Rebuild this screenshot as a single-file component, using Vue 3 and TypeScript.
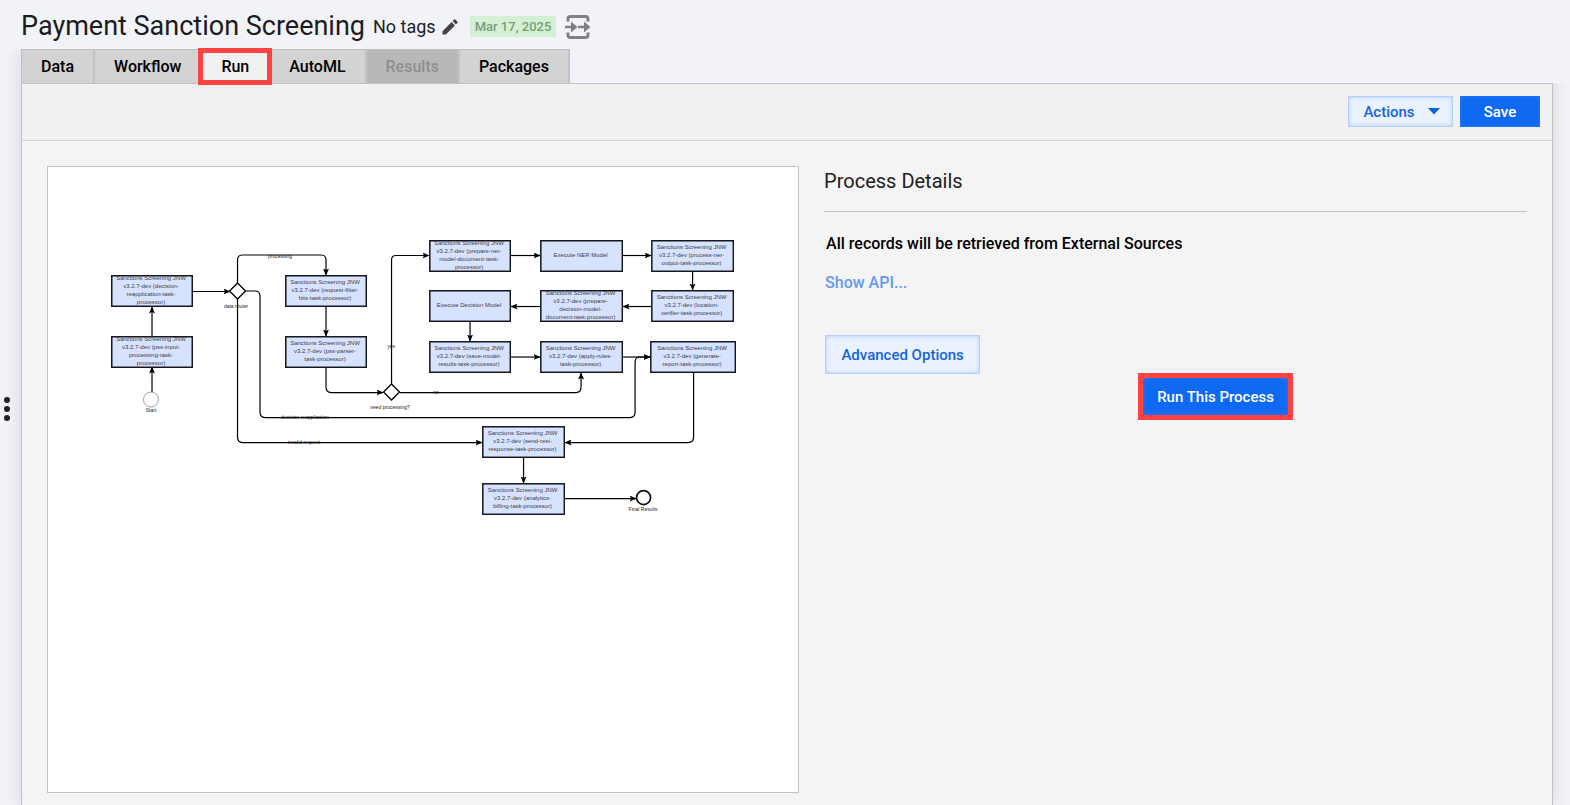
<script setup lang="ts">
import { ref } from 'vue'

interface Tab { name: string; disabled?: boolean }
interface TaskNode { x: number; y: number; w?: number; lines: string[] }
interface EdgeLabel { x: number; y: number; text: string }

const tabs: Tab[] = [
  { name: 'Data' },
  { name: 'Workflow' },
  { name: 'Run' },
  { name: 'AutoML' },
  { name: 'Results', disabled: true },
  { name: 'Packages' },
]
const current = ref('Run')

const product = 'Sanctions Screening JNW'
const nodes: TaskNode[] = [
  { x: 111, y: 275, lines: [product, 'v3.2.7-dev (decision-', 'reapplication-task-', 'processor)'] },
  { x: 111, y: 336, lines: [product, 'v3.2.7-dev (pss-input-', 'processing-task-', 'processor)'] },
  { x: 285, y: 275, lines: [product, 'v3.2.7-dev (request-filter-', 'hits-task-processor)'] },
  { x: 285, y: 336, lines: [product, 'v3.2.7-dev (pss-parser-', 'task-processor)'] },
  { x: 429, y: 240, lines: [product, 'v3.2.7-dev (prepare-ner-', 'model-document-task-', 'processor)'] },
  { x: 540, y: 240, w: 83, lines: ['Execute NER Model'] },
  { x: 651, y: 240, w: 83, lines: [product, 'v3.2.7-dev (process-ner-', 'output-task-processor)'] },
  { x: 429, y: 290, lines: ['Execute Decision Model'] },
  { x: 540, y: 290, w: 83, lines: [product, 'v3.2.7-dev (prepare-', 'decision-model-', 'document-task-processor)'] },
  { x: 651, y: 290, w: 83, lines: [product, 'v3.2.7-dev (location-', 'verifier-task-processor)'] },
  { x: 429, y: 341, lines: [product, 'v3.2.7-dev (save-model-', 'results-task-processor)'] },
  { x: 540, y: 341, w: 83, lines: [product, 'v3.2.7-dev (apply-rules-', 'task-processor)'] },
  { x: 650, y: 341, w: 86, lines: [product, 'v3.2.7-dev (generate-', 'report-task-processor)'] },
  { x: 482, y: 426, w: 83, lines: [product, 'v3.2.7-dev (send-rest-', 'response-task-processor)'] },
  { x: 482, y: 483, w: 83, lines: [product, 'v3.2.7-dev (analytics-', 'billing-task-processor)'] },
]

const edges: string[] = [
  'M152 392V367',
  'M152 337V307',
  'M193 291.500H230',
  'M237.500 283V260Q237.500 255 242.500 255H321Q326 255 326 260V275',
  'M246 291H255Q260 291 260 296V412Q260 417.500 265 417.500H630Q635 417.500 635 412V362Q635 357 640 357H650',
  'M237.500 299V437Q237.500 442.500 242.500 442.500H482',
  'M326 307V336',
  'M326 368V387Q326 392.500 331 392.500H383',
  'M391.500 384V260Q391.500 255.500 396 255.500H429',
  'M400 392.500H576Q581 392.500 581 387V373',
  'M511 255.500H540',
  'M623 255.500H651',
  'M692.500 272V290',
  'M651 306.500H623',
  'M540 306.500H511',
  'M470 322V341',
  'M511 357H540',
  'M623 357H650',
  'M693.500 373V437Q693.500 442.500 688 442.500H565',
  'M523.500 458V483',
  'M565 498.500H636',
]

const labels: EdgeLabel[] = [
  { x: 280, y: 258, text: 'processing' },
  { x: 236, y: 308, text: 'data router' },
  { x: 151, y: 412, text: 'Start' },
  { x: 391, y: 348, text: 'yes' },
  { x: 436, y: 394, text: 'no' },
  { x: 390, y: 409, text: 'need processing?' },
  { x: 305, y: 419, text: 'decision reapplication' },
  { x: 304, y: 444, text: 'invalid request' },
  { x: 643, y: 511, text: 'Final Results' },
]
</script>

<template>
  <div class="page">
    <header class="header">
      <h1 class="title">Payment Sanction Screening</h1>
      <span class="tags">No tags</span>
      <button class="icon-button edit" type="button" aria-label="Edit tags">
        <svg width="16" height="16" viewBox="0 0 16 16" fill="#444">
          <path d="M0.5 15.5V12.2L9.6 3.1L12.9 6.4L3.8 15.5ZM10.6 2.1L12.2 0.5Q12.7 0 13.3 0.5L15.5 2.7Q16 3.3 15.5 3.8L13.9 5.4Z" />
        </svg>
      </button>
      <span class="date">Mar 17, 2025</span>
      <button class="icon-button" type="button" aria-label="Open process flow">
        <svg width="26" height="26" viewBox="0 0 26 26" fill="none" stroke="#808083">
          <path stroke-width="3" d="M3 7.5V5Q3 2.500 5.500 2.500H20.500Q23 2.500 23 5V7.500M3 18.500V21Q3 23.500 5.500 23.500H20.500Q23 23.500 23 21V18.500" />
          <path stroke-width="2.500" d="M0 13H8M13 13H21" />
          <path fill="#808083" stroke="none" d="M6 7.500L12.500 13L6 18.500ZM19 7.500L25.500 13L19 18.500Z" />
        </svg>
      </button>
    </header>

    <main class="frame">
      <nav class="tabs">
        <button
          v-for="tab in tabs"
          :key="tab.name"
          type="button"
          class="tab"
          :class="{ active: tab.name === current }"
          :disabled="tab.disabled"
          @click="current = tab.name"
        >{{ tab.name }}</button>
        <span class="tabs-rest"></span>
      </nav>

      <div class="toolbar">
        <button class="button light actions" type="button">
          Actions
          <svg width="12" height="7" viewBox="0 0 12 7"><path d="M0 0H12L6 6.500Z" fill="#0f62d8" /></svg>
        </button>
        <button class="button primary save" type="button">Save</button>
      </div>

      <div class="content">
        <section class="diagram">
          <svg viewBox="48 167 750 625" role="img" aria-label="Process workflow">
            <defs>
              <marker id="arrow" viewBox="0 0 7 6" refX="6.500" refY="3" markerWidth="7" markerHeight="6" markerUnits="userSpaceOnUse" orient="auto">
                <path d="M0 0L7 3L0 6L1.500 3Z" />
              </marker>
            </defs>
            <path v-for="edge in edges" :key="edge" :d="edge" class="edge" marker-end="url(#arrow)" />
            <path class="gateway" d="M237.500 283L245.500 291L237.500 299L229.500 291Z" />
            <path class="gateway" d="M391.500 384L399.500 392L391.500 400L383.500 392Z" />
            <circle class="start" cx="151" cy="399.500" r="7.500" />
            <circle class="end" cx="643.500" cy="497.500" r="7" />
            <svg v-for="node in nodes" :key="`${node.x}-${node.y}`" :x="node.x" :y="node.y" :width="node.w ?? 82" height="32">
              <rect class="task" x="0.750" y="0.750" :width="(node.w ?? 82) - 1.5" height="30.500" />
              <text
                v-for="(line, i) in node.lines"
                :key="line"
                class="task-text"
                :x="(node.w ?? 82) / 2 - 1"
                :y="21 - node.lines.length * 4 + i * 8"
              >{{ line }}</text>
            </svg>
            <text v-for="label in labels" :key="label.text" class="label" :x="label.x" :y="label.y">{{ label.text }}</text>
          </svg>
        </section>

        <section class="details">
          <h2>Process Details</h2>
          <p>All records will be retrieved from External Sources</p>
          <a href="#api">Show API...</a>
          <button class="button light advanced" type="button">Advanced Options</button>
          <button class="button primary run" type="button">Run This Process</button>
        </section>
      </div>
    </main>

    <button class="drawer" type="button" aria-label="Open side panel"><i></i><i></i><i></i></button>
  </div>
</template>

<style>
body {
  margin: 0;
  background: #f2f3f8;
}
</style>

<style scoped>
* {
  box-sizing: border-box;
}

.page {
  position: relative;
  display: flex;
  flex-direction: column;
  min-height: 100vh;
  overflow: hidden;
  font-family: Roboto, "Liberation Sans", sans-serif;
  color: #000;
}

button {
  margin: 0;
  padding: 0;
  border: 0;
  font: inherit;
  cursor: pointer;
}

.header {
  position: relative;
  z-index: 1;
  display: flex;
  align-items: center;
  height: 49px;
  padding: 4px 21px 0;
  background: #f2f3f8;
}

.title {
  margin: 0 8px 0 0;
  padding-bottom: 2px;
  font-size: 27px;
  line-height: 32px;
  font-weight: 400;
  color: #1c1c1c;
  white-space: nowrap;
}

.tags {
  font-size: 18px;
  line-height: 24px;
  color: #212121;
}

.icon-button {
  display: flex;
  background: none;
}

.edit {
  margin: 0 12px 0 6px;
}

.date {
  margin-right: 9px;
  padding: 0 5px;
  font-size: 13px;
  line-height: 21px;
  font-weight: 500;
  color: #799c79;
  background: #d4f0d4;
}

.frame {
  flex: 1;
  display: flex;
  flex-direction: column;
  margin: 0 17px 0 21px;
  background: #f4f4f4;
  box-shadow: 0 0 18px rgba(0, 0, 0, 0.12);
}

.tabs {
  display: flex;
  height: 34px;
}

.tab {
  position: relative;
  padding: 0 19px;
  border-top: 1px solid #c0c0c0;
  border-right: 2px solid #c3c3c3;
  background: #d3d3d3;
  font-size: 16px;
  line-height: 33px;
  font-weight: 500;
}

.tab:first-child {
  border-left: 1px solid #c0c0c0;
}

.tab:disabled {
  color: #8f8f8f;
  background: #b8b8b8;
}

.tab.active {
  background: #f1f1f1;
}

.tab.active::after {
  content: "";
  position: absolute;
  z-index: 2;
  inset: -2px -4px;
  border: 5px solid #ff4242;
}

.tabs-rest {
  position: relative;
  flex: 1;
  margin-right: -40px;
  background: #f2f3f8;
}

.toolbar {
  display: flex;
  justify-content: flex-end;
  gap: 7px;
  height: 58px;
  padding: 12px 12px 0;
  border: 1px solid #c2c2c2;
  border-bottom-color: #d5d5d5;
  background: #f1f1f1;
}

.button {
  display: flex;
  align-items: center;
  justify-content: center;
  font-size: 15px;
  font-weight: 500;
}

.light {
  color: #1565d8;
  background: #ebf2ff;
  box-shadow: inset 0 0 0 1px #b4d0fb, inset 0 0 5px #8fb9fa;
}

.primary {
  color: #fff;
  background: #0f69f2;
  box-shadow: inset 0 0 5px #2b7bf6;
}

.actions {
  gap: 13px;
  width: 105px;
  height: 31px;
  padding-left: 2px;
}

.save {
  width: 80px;
  height: 31px;
}

.content {
  flex: 1;
  display: grid;
  grid-template-columns: 1.07fr 1fr;
  align-items: start;
  gap: 25px;
  padding: 25px 25px 12px;
  border: solid #c2c2c2;
  border-width: 0 1px;
}

.diagram {
  border: 1px solid #c2c2c2;
  background: #fff;
}

.diagram > svg {
  display: block;
  width: 100%;
}

.edge {
  fill: none;
  stroke: #000;
  stroke-width: 1.2;
}

.gateway {
  fill: #fff;
  stroke: #000;
  stroke-width: 1.3;
}

.start {
  fill: #fff;
  stroke: #888;
  stroke-width: 0.8;
}

.end {
  fill: #fff;
  stroke: #111;
  stroke-width: 1.7;
}

.task {
  fill: #d7e2ff;
  stroke: #15171c;
  stroke-width: 1.5;
}

.task-text,
.label {
  font-family: "Liberation Sans", Arial, sans-serif;
  text-anchor: middle;
}

.task-text {
  font-size: 6px;
  fill: #3d4048;
}

.label {
  font-size: 5px;
  fill: #222;
}

.details {
  display: flex;
  flex-direction: column;
  align-items: flex-start;
}

h2 {
  align-self: stretch;
  margin: 0;
  padding-bottom: 15px;
  border-bottom: 1px solid #c2c2c2;
  font-size: 20px;
  line-height: 30px;
  font-weight: 400;
  color: #212121;
}

p {
  margin: 22px 0 0 2px;
  font-size: 16px;
  line-height: 20px;
  font-weight: 500;
}

a {
  margin: 19px 0 0 1px;
  font-size: 16px;
  line-height: 20px;
  font-weight: 500;
  color: #6699f2;
  text-decoration: none;
}

.advanced {
  width: 155px;
  height: 39px;
  margin: 42px 0 0 1px;
}

.run {
  align-self: center;
  width: 155px;
  height: 47px;
  margin: -1px 0 0 80px;
  border: 5px solid #ff4242;
}

.drawer {
  position: absolute;
  top: 397px;
  left: 4px;
  display: grid;
  gap: 3px;
  background: none;
}

.drawer i {
  width: 6px;
  height: 6px;
  border-radius: 50%;
  background: #212121;
}
</style>
